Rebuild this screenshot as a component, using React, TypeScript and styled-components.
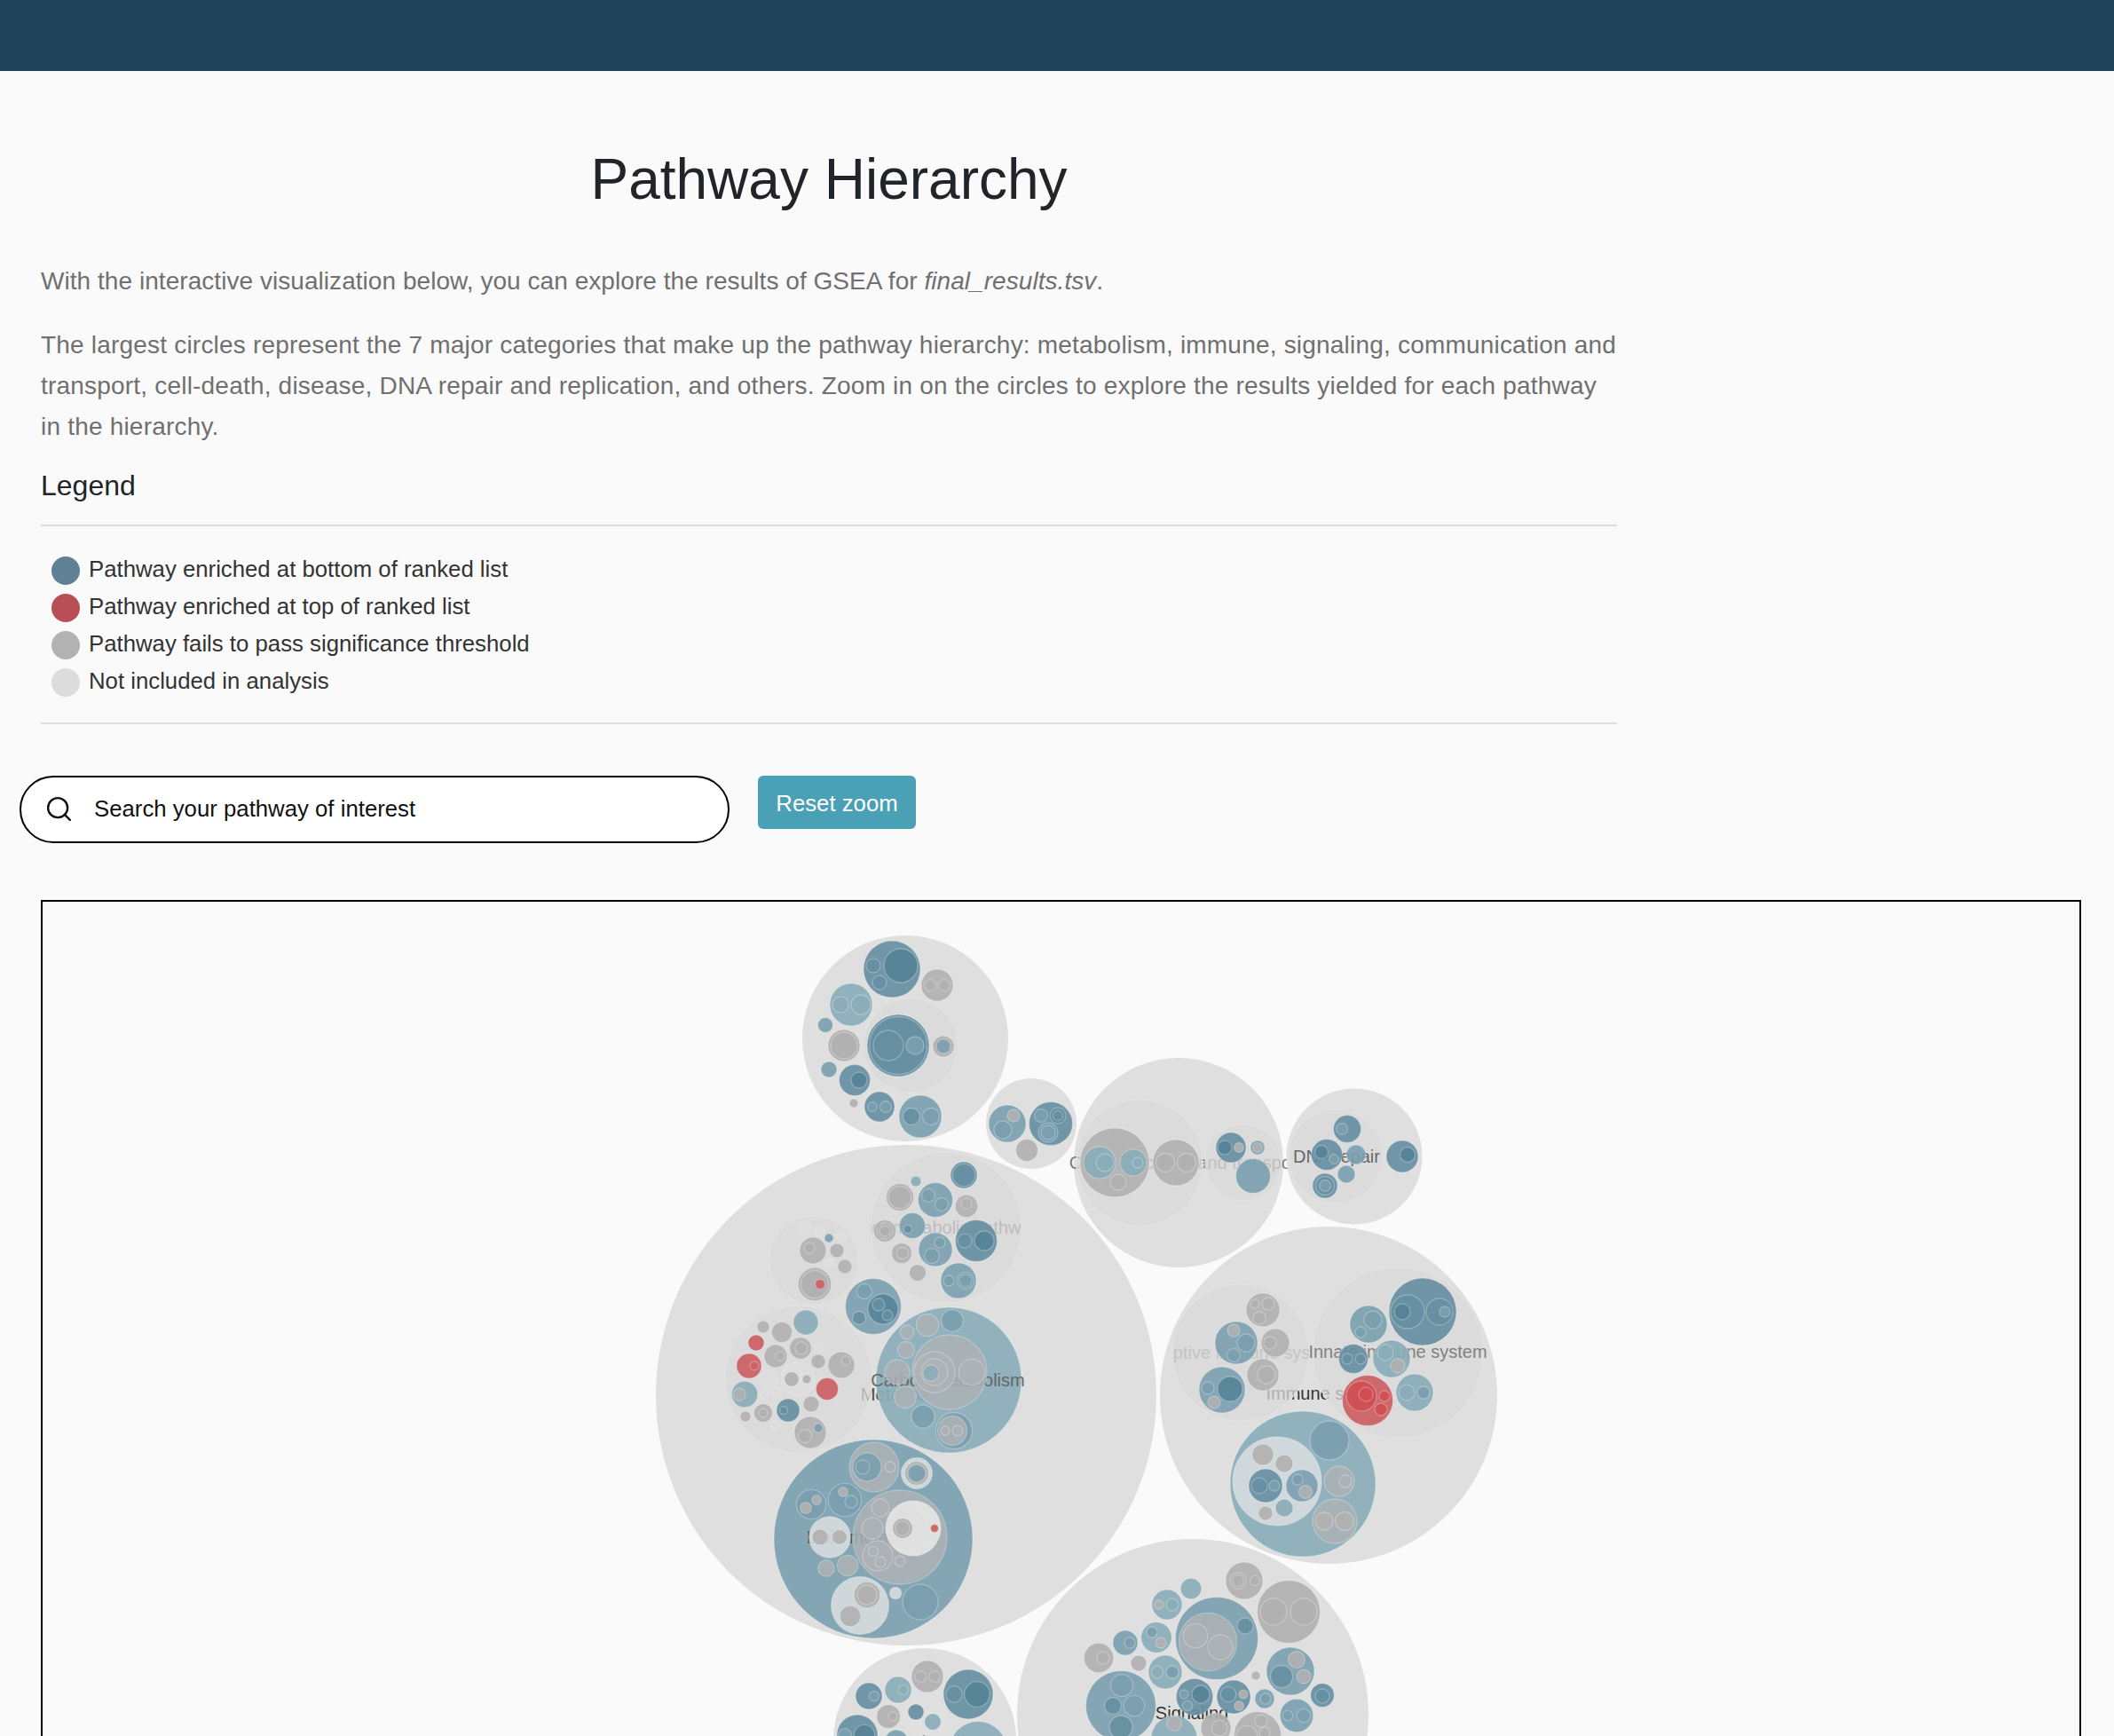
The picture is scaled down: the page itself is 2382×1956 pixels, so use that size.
import React from 'react';
import styled, { createGlobalStyle } from 'styled-components';
import { Search } from 'lucide-react';

type Tone = 'root' | 'group' | 'ghost' | 'g' | 'gb' | 'b1' | 'b2' | 'b3' | 'b4' | 'r1' | 'r2' | 'pale' | 'white';
type Dot = [number, number, number, Tone];
type Caption = { text: string; x: number; y: number; ink: string; clip?: [number, number, number] };
type Item = Dot | Caption;

const tones: Record<Tone, [string, number]> = {
  root: ['#dfdfdf', 1],
  group: ['#d9d9d9', 0.74],
  ghost: ['#e2e2e2', 0.5],
  g: ['#b0b0b0', 0.9],
  gb: ['#adb2b5', 0.84],
  b1: ['#8aacb9', 0.92],
  b2: ['#7a9fae', 0.9],
  b3: ['#668fa2', 0.92],
  b4: ['#548195', 0.85],
  r1: ['#cc6266', 0.95],
  r2: ['#cf4e52', 0.85],
  pale: ['#dcdfe0', 0.85],
  white: ['#e3e4e4', 0.95],
};

const chart: Item[] = [
  // top unnamed category
  [1020, 1171, 116, 'root'],
  [1026, 1179, 53, 'group'],
  [1012, 1179, 35, 'b3'], [1012, 1179, 32.5, 'b3'], [1001, 1179, 17, 'b3'], [1031, 1179, 10, 'b2'],
  [1063, 1180, 12, 'g'], [1063, 1180, 8, 'b2'],
  [1005, 1093, 32, 'b3'], [1015, 1089, 19, 'b4'], [984, 1089, 8, 'b3'], [991, 1108, 8, 'b3'],
  [1056, 1111, 18, 'g'], [1048, 1111, 6.5, 'g'], [1064, 1111, 6.5, 'g'],
  [959, 1133, 24, 'b1'], [947, 1133, 9, 'b1'], [970, 1133, 11, 'b1'],
  [930, 1156, 8.5, 'b2'],
  [951, 1179, 18, 'g'], [951, 1179, 15, 'g'],
  [934, 1206, 9, 'b2'],
  [963, 1218, 17.5, 'b3'], [968, 1218, 9, 'b4'],
  [962, 1244, 5, 'g'],
  [991, 1248, 20, 'ghost'], [991, 1248, 17, 'b3'], [983, 1248, 5.5, 'b2'], [998, 1248, 6.5, 'b2'],
  [1037, 1259, 24, 'b2'], [1027, 1259, 9.5, 'b3'], [1049, 1259, 9.5, 'b2'],

  // small category next to it
  [1162, 1267, 51, 'root'],
  [1135, 1267, 21, 'b2'], [1142, 1258, 7, 'g'], [1130, 1274, 10, 'b2'],
  [1184, 1267, 24.5, 'b3'], [1173, 1258, 7.5, 'b2'], [1192, 1258, 9, 'b3'], [1192, 1258, 5.5, 'b3'],
  [1181, 1277, 11, 'b2'], [1181, 1277, 8, 'b2'],
  [1157, 1297, 12.5, 'g'],

  // communication and transport
  [1328, 1311, 118, 'root'],
  { text: 'Communication and transport', x: 1336, y: 1318, ink: '#777' },
  [1284, 1311, 71, 'group'],
  [1256, 1311, 39, 'g'], [1239, 1311, 18, 'b1'], [1245, 1311, 10, 'b1'],
  [1277, 1311, 15, 'b1'], [1282, 1311, 6, 'b1'], [1260, 1333, 9, 'g'],
  [1325, 1311, 26, 'g'], [1313, 1311, 10.5, 'g'], [1337, 1311, 10.5, 'g'],
  [1401, 1311, 43, 'group'],
  [1387, 1294, 17, 'b3'], [1380, 1294, 8, 'b4'], [1396, 1294, 5.5, 'g'],
  [1417, 1294, 8, 'b2'], [1417, 1294, 5.5, 'g'],
  [1412, 1326, 19.5, 'b2'],

  // DNA repair
  [1526, 1304, 76.5, 'root'],
  [1505, 1304, 53, 'group'],
  { text: 'DNA repair', x: 1506, y: 1311, ink: '#666' },
  [1518, 1273, 15.5, 'b3'], [1512, 1273, 6.5, 'b2'],
  [1495, 1302, 17.5, 'b3'], [1489, 1299, 7.5, 'b4'], [1503, 1307, 5.5, 'b2'],
  [1528, 1302, 11, 'b2'], [1517, 1324, 10, 'b2'],
  [1493, 1337, 14, 'b3'], [1493, 1337, 10.5, 'b3'], [1493, 1337, 6.5, 'b2'],
  [1580, 1304, 18, 'b3'], [1586, 1302, 8.5, 'b4'],

  // metabolism
  [1021, 1573, 282, 'root'],
  { text: 'Metabolism', x: 1021, y: 1579, ink: '#444' },
  [1066, 1384, 85, 'group'],
  { text: 'Other metabolic pathways', x: 1066, y: 1391, ink: '#bdbdbd', clip: [1066, 1384, 85] },
  [1086, 1325, 15, 'b3'], [1086, 1325, 12.7, 'b3'],
  [1032, 1332, 6, 'b1'],
  [1014, 1350, 15.5, 'g'], [1014, 1350, 12.7, 'g'],
  [1054, 1353, 19.5, 'b2'], [1046, 1348, 7.5, 'b2'], [1061, 1358, 7.5, 'b2'],
  [1089, 1360, 12.7, 'g'], [1089, 1357, 6, 'g'],
  [1028, 1382, 14.5, 'b2'], [1023, 1386, 4.5, 'b3'],
  [997, 1388, 12.5, 'g'], [997, 1388, 9, 'g'], [997, 1388, 6, 'g'],
  [1100, 1399, 23.5, 'b3'], [1087, 1399, 8, 'b3'], [1109, 1399, 11, 'b4'],
  [1054, 1409, 19, 'b2'], [1059, 1401, 6, 'b2'], [1050, 1416, 8.5, 'b2'],
  [1016, 1413, 11.5, 'g'], [1017, 1413, 6.5, 'g'],
  [1034, 1435, 9.5, 'g'],
  [1080, 1444, 20, 'b2'], [1069, 1444, 6, 'b2'], [1088, 1444, 9.5, 'b2'], [1088, 1444, 7, 'b2'],

  [917, 1421, 50, 'group'],
  [906, 1385, 8, 'ghost'], [923, 1388, 5.5, 'ghost'], [948, 1394, 5.5, 'ghost'], [934, 1425, 5.5, 'ghost'],
  [934, 1396, 5, 'b2'],
  [916, 1410, 15, 'g'], [912, 1407, 6, 'g'],
  [943, 1410, 8, 'g'], [952, 1428, 8, 'g'],
  [918, 1448, 18.7, 'g'], [918, 1448, 15.5, 'g'], [924, 1448, 5.5, 'r1'],

  [984, 1473, 31.5, 'b2'], [974, 1456, 8.5, 'b2'], [995, 1476, 17, 'b4'],
  [990, 1471, 7, 'b3'], [1000, 1483, 6, 'b3'], [968, 1486, 7.5, 'b3'],

  [900, 1555, 83, 'group'],
  [908, 1491, 14, 'b1'], [860, 1496, 7, 'g'], [881, 1502, 11.5, 'g'], [852, 1514, 9, 'r1'],
  [902, 1520, 12.3, 'g'], [903, 1520, 7, 'g'],
  [874, 1529, 13, 'g'], [879, 1529, 5, 'g'],
  [923, 1518, 5.5, 'ghost'],
  [922, 1535, 8, 'g'],
  [948, 1539, 15, 'g'], [953, 1534, 5, 'g'],
  [844, 1540, 14, 'r1'], [850, 1540, 5, 'r1'],
  [899, 1555, 19, 'ghost'], [892, 1555, 8.3, 'g'], [909, 1555, 5, 'g'], [867, 1555, 10, 'ghost'],
  [932, 1566, 12.5, 'r1'],
  [839, 1572, 14.7, 'b1'], [833, 1572, 7, 'g'],
  [862, 1572, 5.5, 'ghost'], [876, 1570, 5.5, 'ghost'],
  [914, 1583, 9, 'g'],
  [888, 1590, 13, 'b3'], [883, 1590, 4.5, 'b3'],
  [860, 1593, 10.5, 'g'], [860, 1593, 5, 'g'],
  [840, 1597, 6, 'g'], [874, 1607, 5.5, 'ghost'],
  [913, 1615, 18, 'g'], [922, 1610, 5, 'b2'], [907, 1619, 7.5, 'g'],

  [1069, 1556, 82, 'b1'],
  { text: 'Carbon metabolism', x: 1068, y: 1563, ink: '#666' },
  [1073, 1489, 12.3, 'b2'], [1045, 1494, 12.7, 'gb'], [1022, 1502, 8, 'gb'], [1021, 1522, 9.5, 'gb'],
  [1070, 1547, 42, 'gb'], [1053, 1547, 23, 'gb'], [1053, 1547, 15, 'gb'], [1049, 1548, 9, 'b1'],
  [1095, 1547, 14.7, 'gb'], [1011, 1547, 14, 'gb'], [1020, 1575, 12.5, 'gb'],
  [1040, 1597, 13, 'b2'],
  [1075, 1613, 20.5, 'b2'], [1073, 1613, 16.5, 'gb'], [1065, 1613, 5, 'gb'], [1079, 1613, 6, 'gb'],

  [984, 1735, 112, 'b2'],
  { text: 'Lipid metabolism', x: 984, y: 1740, ink: '#555' },
  [985, 1654, 28, 'gb'], [977, 1654, 16, 'b2'], [972, 1654, 8, 'b2'], [1003, 1654, 6, 'gb'],
  [1033, 1661, 17.5, 'pale'], [1033, 1661, 13.5, 'g'], [1033, 1661, 10, 'b2'],
  [914, 1696, 16.7, 'b2'], [920, 1691, 5.3, 'g'], [908, 1700, 6.3, 'g'],
  [952, 1691, 18.7, 'b2'], [950, 1682, 5.3, 'g'], [959, 1693, 7, 'b2'],
  [935, 1733, 23.3, 'pale'], [924, 1733, 9, 'g'], [946, 1733, 8.3, 'g'],
  [1014, 1733, 53, 'gb'],
  [992, 1700, 10, 'gb'], [983, 1723, 12, 'gb'], [989, 1754, 17, 'gb'], [984, 1749, 5.7, 'gb'], [992, 1761, 6, 'gb'], [1014, 1760, 6, 'gb'],
  [1029, 1723, 31, 'white'], [1022, 1723, 22, 'root'], [1017, 1723, 11.3, 'g'], [1017, 1723, 8.3, 'g'], [1053, 1723, 4.5, 'r1'],
  [931, 1768, 9.3, 'gb'], [955, 1765, 11.7, 'gb'],
  [969, 1810, 32.5, 'pale'], [977, 1798, 14.7, 'g'], [977, 1798, 11, 'g'], [958, 1822, 11.7, 'g'],
  [1009, 1796, 6.7, 'pale'],
  [1037, 1806, 20, 'b2'],

  // immune system
  [1497, 1573, 190, 'root'],
  { text: 'Immune system', x: 1497, y: 1578, ink: '#333' },
  [1398, 1525, 77, 'group'],
  { text: 'Adaptive immune system', x: 1398, y: 1532, ink: '#c4c4c4', clip: [1398, 1525, 77] },
  [1423, 1477, 19, 'g'], [1414, 1470, 5, 'g'], [1429, 1470, 7, 'g'], [1419, 1486, 7, 'g'],
  [1393, 1514, 24, 'b2'], [1390, 1500, 7, 'g'], [1404, 1514, 10, 'b2'], [1390, 1528, 7.5, 'b2'],
  [1437, 1514, 16, 'g'], [1431, 1514, 7, 'g'],
  [1423, 1550, 18, 'g'], [1427, 1550, 10, 'g'],
  [1377, 1567, 26, 'b2'], [1386, 1566, 14, 'b4'], [1361, 1565, 7, 'b2'], [1368, 1581, 7, 'g'],
  [1575, 1525, 96, 'group'],
  { text: 'Innate immune system', x: 1575, y: 1531, ink: '#808080' },
  [1603, 1479, 38, 'b3'], [1586, 1479, 19, 'b3'], [1580, 1479, 9, 'b4'], [1622, 1479, 15, 'b3'], [1628, 1479, 6, 'b2'],
  [1542, 1493, 21, 'b2'], [1547, 1488, 10, 'b2'], [1533, 1502, 6, 'b2'],
  [1525, 1532, 16.5, 'b3'], [1518, 1532, 6, 'b3'], [1533, 1532, 6, 'b3'],
  [1568, 1532, 21, 'b1'], [1561, 1525, 9, 'b1'], [1575, 1540, 8, 'g'],
  [1541, 1579, 28.5, 'r1'], [1534, 1574, 17, 'r2'], [1539, 1572, 8, 'r2'], [1560, 1574, 6, 'r2'], [1556, 1589, 7, 'r2'],
  [1594, 1570, 21, 'b1'], [1585, 1570, 9, 'b1'], [1604, 1570, 7, 'b2'],
  [1468, 1673, 82, 'b1'],
  [1439, 1670, 50, 'pale'],
  [1423, 1640, 12, 'g'], [1447, 1650, 10, 'g'],
  [1426, 1675, 19, 'b3'], [1419, 1675, 9, 'b3'], [1436, 1675, 6, 'b2'],
  [1467, 1675, 18, 'b2'], [1462, 1668, 6, 'b2'], [1471, 1682, 7.5, 'g'],
  [1447, 1700, 10, 'b1'], [1426, 1706, 8, 'g'],
  [1498, 1624, 22, 'b2'],
  [1509, 1670, 17, 'gb'], [1516, 1670, 7, 'gb'],
  [1504, 1715, 25, 'gb'], [1492, 1715, 10, 'g'], [1515, 1715, 10.5, 'g'],

  // signaling
  [1344, 1933, 198, 'root'],
  { text: 'Signaling', x: 1343, y: 1938, ink: '#333' },
  [1402, 1782, 21, 'g'], [1395, 1782, 9.3, 'g'], [1395, 1782, 6.5, 'g'], [1414, 1782, 5.5, 'g'],
  [1452, 1817, 35.5, 'g'], [1435, 1817, 15, 'g'], [1469, 1817, 15, 'g'],
  [1342, 1791, 11.7, 'b1'],
  [1315, 1809, 17, 'b1'], [1306, 1809, 5, 'g'], [1321, 1809, 7, 'b1'],
  [1371, 1847, 46.5, 'b2'], [1361, 1851, 32.7, 'gb'], [1347, 1844, 13.7, 'gb'], [1375, 1857, 14, 'gb'], [1403, 1833, 9, 'b3'],
  [1303, 1846, 17.3, 'b1'], [1298, 1840, 6, 'b2'], [1308, 1852, 6, 'g'],
  [1268, 1852, 14, 'b2'], [1273, 1852, 6, 'b2'],
  [1238, 1869, 16.7, 'g'], [1243, 1869, 7, 'g'],
  [1283, 1875, 9, 'g'],
  [1313, 1885, 19, 'b1'], [1304, 1885, 6.7, 'b1'], [1321, 1885, 7, 'b2'],
  [1454, 1884, 27, 'b2'], [1461, 1871, 9.5, 'g'], [1444, 1890, 12.5, 'b3'], [1469, 1890, 8, 'g'],
  [1413, 1889, 10, 'ghost'], [1415, 1889, 5, 'g'],
  [1346, 1913, 20.7, 'b3'], [1353, 1910, 10, 'b4'], [1334, 1910, 5, 'b2'], [1338, 1923, 5.7, 'b2'],
  [1390, 1913, 19, 'b3'], [1384, 1910, 8.7, 'b3'], [1401, 1910, 5, 'g'], [1396, 1923, 5.3, 'g'],
  [1425, 1915, 11, 'b2'], [1426, 1915, 6, 'b2'],
  [1490, 1911, 13.3, 'b3'], [1490, 1912, 8, 'b3'],
  [1461, 1934, 18.7, 'b2'], [1451, 1934, 5.7, 'b2'], [1469, 1934, 7.7, 'b2'],
  [1263, 1923, 39.5, 'b2'], [1264, 1900, 12.5, 'b2'], [1254, 1923, 9.5, 'b3'], [1278, 1923, 11.7, 'b2'], [1263, 1947, 13, 'b3'],
  [1323, 1960, 26, 'b1'], [1323, 1943, 8.3, 'g'],
  [1370, 1948, 17, 'g'], [1374, 1948, 8.7, 'g'],
  [1417, 1956, 26.5, 'g'], [1421, 1940, 7, 'g'], [1405, 1957, 11.7, 'g'], [1425, 1953, 6, 'g'],

  // bottom category, cut by the window
  [1042, 1961, 103, 'root'],
  { text: 'Cell growth pathway', x: 1040, y: 1971, ink: '#444' },
  [979, 1912, 15, 'b3'], [985, 1912, 5.7, 'b2'],
  [1012, 1905, 15, 'b1'], [1018, 1905, 5.7, 'b1'],
  [1045, 1890, 18, 'g'], [1037, 1890, 6.3, 'g'], [1053, 1890, 6.3, 'g'],
  [1091, 1910, 28, 'b3'], [1075, 1910, 9.3, 'b3'], [1101, 1910, 14.3, 'b4'],
  [1001, 1935, 13.3, 'g'], [1006, 1935, 5, 'g'],
  [1042, 1935, 24, 'ghost'], [1032, 1930, 9, 'b3'], [1051, 1941, 9.3, 'b1'],
  [966, 1956, 23, 'b3'], [952, 1956, 7.3, 'b2'], [974, 1956, 11.7, 'b4'],
  [1010, 1963, 13, 'b2'],
  [1102, 1973, 32.5, 'b1'],
];

const legend = [
  { color: '#5f8095', label: 'Pathway enriched at bottom of ranked list' },
  { color: '#b84f57', label: 'Pathway enriched at top of ranked list' },
  { color: '#b2b2b2', label: 'Pathway fails to pass significance threshold' },
  { color: '#dcdcdc', label: 'Not included in analysis' },
];

export default function App() {
  return (
    <Page>
      <GlobalStyle />
      <TopBar />
      <Intro>
        <Title>Pathway Hierarchy</Title>
        <Text>
          With the interactive visualization below, you can explore the results of GSEA for <em>final_results.tsv</em>.
        </Text>
        <Text>
          The largest circles represent the 7 major categories that make up the pathway hierarchy: metabolism, immune,
          signaling, communication and
          <br />
          transport, cell-death, disease, DNA repair and replication, and others. Zoom in on the circles to explore the
          results yielded for each pathway
          <br />
          in the hierarchy.
        </Text>
        <LegendTitle>Legend</LegendTitle>
        <LegendBox>
          {legend.map((row) => (
            <LegendRow key={row.label}>
              <LegendDot $color={row.color} />
              {row.label}
            </LegendRow>
          ))}
        </LegendBox>
      </Intro>
      <Controls>
        <SearchBox>
          <Search size={33} strokeWidth={1.7} />
          <span>Search your pathway of interest</span>
        </SearchBox>
        <ResetButton>Reset zoom</ResetButton>
      </Controls>
      <ChartFrame>
        <svg width="2295" height="1100" viewBox="48 1017 2295 1100">
          <defs>
            {chart.map((item, i) =>
              !Array.isArray(item) && item.clip ? (
                <clipPath id={`label-${i}`} key={i}>
                  <circle cx={item.clip[0]} cy={item.clip[1]} r={item.clip[2]} />
                </clipPath>
              ) : null,
            )}
          </defs>
          {chart.map((item, i) =>
            Array.isArray(item) ? (
              <Node key={i} cx={item[0]} cy={item[1]} r={item[2]} $tone={item[3]} />
            ) : (
              <Label key={i} x={item.x} y={item.y} fill={item.ink} clipPath={item.clip ? `url(#label-${i})` : undefined}>
                {item.text}
              </Label>
            ),
          )}
        </svg>
      </ChartFrame>
    </Page>
  );
}

const GlobalStyle = createGlobalStyle`
  html, body {
    margin: 0;
    height: 100%;
    overflow: hidden;
    background: #fafafa;
  }
`;

const Page = styled.div`
  height: 1956px;
  overflow: hidden;
  background: #fafafa;
  font-family: 'Liberation Sans', Arial, sans-serif;
`;

const TopBar = styled.header`
  height: 80px;
  background: #1f445a;
`;

const Intro = styled.section`
  width: 1776px;
  margin-left: 46px;
`;

const Title = styled.h1`
  margin: 0;
  padding-top: 84px;
  font-size: 64px;
  line-height: 76px;
  font-weight: 400;
  text-align: center;
  color: #212529;
`;

const Text = styled.p`
  margin: 0 0 26px;
  font-size: 28px;
  line-height: 46px;
  letter-spacing: 0.2px;
  white-space: nowrap;
  color: #707070;

  &:first-of-type {
    margin-top: 54px;
    letter-spacing: 0.05px;
  }
`;

const LegendTitle = styled.h2`
  margin: -3px 0 0;
  font-size: 32px;
  line-height: 40px;
  font-weight: 400;
  color: #212529;
`;

const LegendBox = styled.div`
  margin-top: 24px;
  padding: 27px 12px 26px;
  border-top: 2px solid #dedede;
  border-bottom: 2px solid #dedede;
  display: flex;
  flex-direction: column;
`;

const LegendRow = styled.div`
  display: flex;
  align-items: center;
  gap: 10px;
  height: 42px;
  font-size: 25.75px;
  color: #333;
`;

const LegendDot = styled.span<{ $color: string }>`
  width: 32px;
  height: 32px;
  margin-top: 3px;
  border-radius: 50%;
  background: ${(p) => p.$color};
`;

const Controls = styled.div`
  display: flex;
  align-items: flex-start;
  gap: 32px;
  margin: 58px 0 0 22px;
`;

const SearchBox = styled.div`
  box-sizing: border-box;
  width: 800px;
  height: 76px;
  display: flex;
  align-items: center;
  gap: 23px;
  padding: 0 0 2px 26px;
  background: #fff;
  border: 2px solid #000;
  border-radius: 38px;
  font-size: 25.75px;
  color: #111;
`;

const ResetButton = styled.button`
  width: 178px;
  height: 60px;
  padding: 2px 0 0;
  background: #4aa0b5;
  border: none;
  border-radius: 6px;
  font-family: inherit;
  font-size: 25.75px;
  color: #fff;
`;

const ChartFrame = styled.div`
  box-sizing: border-box;
  width: 2299px;
  height: 1200px;
  margin: 64px 0 0 46px;
  border: 2px solid #000;
  overflow: hidden;
`;

const Node = styled.circle<{ $tone: Tone }>`
  fill: ${(p) => tones[p.$tone][0]};
  fill-opacity: ${(p) => tones[p.$tone][1]};
  stroke: ${(p) => (p.$tone === 'root' ? 'none' : p.$tone === 'group' || p.$tone === 'ghost' ? '#e2e2e2' : 'rgba(255,255,255,0.26)')};
  stroke-width: 1.3;
`;

const Label = styled.text`
  font-size: 20px;
  text-anchor: middle;
`;
